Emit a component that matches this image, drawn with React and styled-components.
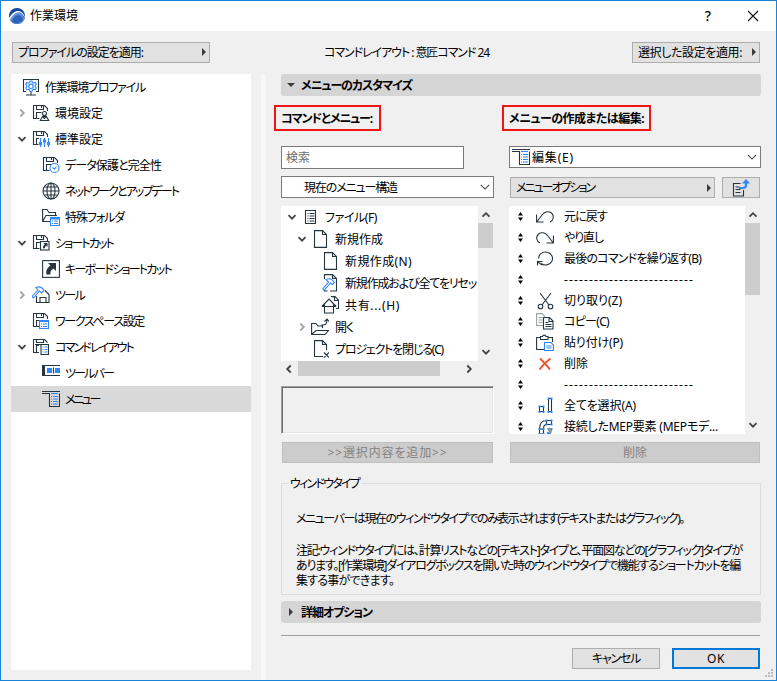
import React, { useLayoutEffect, useRef, useState } from "react";
import styled, { createGlobalStyle, css } from "styled-components";

const INK = "#263640";
const BLUE = "#2f86ff";

// spreads the letters of one line so that it takes exactly `w` pixels
const Label = ({ w, children, ...rest }) => {
  const ref = useRef(null);
  const [spacing, setSpacing] = useState(0);

  useLayoutEffect(() => {
    const natural = ref.current.getBoundingClientRect().width;
    setSpacing((w - natural) / children.length);
  }, []);

  return (
    <Text ref={ref} style={{ letterSpacing: `${spacing}px` }} {...rest}>
      {children}
    </Text>
  );
};

const Svg = ({ size = 18, children }) => (
  <svg width={size} height={size} viewBox={`0 0 ${size} ${size}`} fill="none" stroke={INK} strokeWidth="1.1">
    {children}
  </svg>
);

const Disk = () => (
  <>
    <path d="M7.5 14.5H1.5V1.5H12.5L15.5 4.5V7" />
    <path d="M4.5 1.5V5.5H11.5V1.5M9.5 2V4M4.5 14V8.5H9.5" />
  </>
);

const Lines = ({ x, y, w, n, gap = 2.5 }) =>
  Array.from({ length: n }, (_, i) => (
    <path key={i} stroke={BLUE} d={`M${x} ${y + i * gap}h1M${x + 2} ${y + i * gap}h${w}`} />
  ));

const icons = {
  profile: (
    <Svg>
      <path d="M4 13.5H1.5V1.5H16.5V13.5H14M9 14V16.5M4 17h10" />
      <path stroke={BLUE} d="M8 3h2l.4 1.6 1.2.6 1.6-.7 1.1 1.7-1.2 1.2v1.4l1.2 1.1-1 1.8-1.7-.5-1.2.8L10 13.5H8l-.4-1.5-1.2-.8-1.7.5-1-1.8 1.2-1.1V7.4L3.7 6.2l1.1-1.7 1.6.7 1.2-.6z" />
      <circle cx="9" cy="8.3" r="2.2" stroke={BLUE} />
    </Svg>
  ),
  user: (
    <Svg>
      <Disk />
      <circle cx="12.5" cy="9.5" r="2" fill="#fff" />
      <path fill="#fff" d="M10.5 12.5h4l2.2 4H8.3zM11 13l1.5 1.5L14 13" />
    </Svg>
  ),
  sliders: (
    <Svg>
      <path d="M6.5 14.5H1.5V1.5H12.5L15.5 4.5V7M4.5 1.5V5.5H11.5V1.5M9.5 2V4M4.5 14V8.5H7" />
      <path stroke={BLUE} strokeWidth="1.2" d="M8.5 8v9M12.5 8v9M16.5 8v9" />
      <path stroke={BLUE} strokeWidth="3" d="M7 13.5h3M11 11h3M15 13.5h3" />
    </Svg>
  ),
  clock: (
    <Svg>
      <Disk />
      <circle cx="12.5" cy="12" r="4.5" fill="#fff" stroke={BLUE} />
      <path stroke={BLUE} d="M10.5 11.5l2 1.5 2-2.5" />
    </Svg>
  ),
  globe: (
    <Svg>
      <circle cx="9" cy="9" r="8" />
      <ellipse cx="9" cy="9" rx="4" ry="8" />
      <path d="M9 1v16M1 9h16M2.5 5h13M2.5 13h13" />
    </Svg>
  ),
  folder: (
    <Svg>
      <path d="M8 13.5H.6V1.5H5L7 4.5H13.5V7.5M.6 13.5L4 7.5H15" />
      <rect x="8.5" y="9.5" width="9" height="8" fill="#fff" stroke={BLUE} />
      <path stroke={BLUE} strokeWidth="2" d="M8 10.5h10" />
      <Lines x={10} y={13} w={4} n={2} />
    </Svg>
  ),
  diskLink: (
    <Svg>
      <Disk />
      <rect x="8.5" y="7.5" width="8.5" height="8.5" fill="#fff" />
      <path fill={INK} stroke="none" d="M11.5 9h4v4l-1.3-1.3q-1.4.8-1.2 2.6h-2q-.5-2.6 1.8-4z" />
    </Svg>
  ),
  link: (
    <Svg>
      <rect x=".6" y=".6" width="16.8" height="16.8" />
      <path fill={INK} stroke="none" d="M6 3h8v8l-2.5-2.5C9 10 8 11.5 8.5 14.5H4.5C3.5 10.5 5.5 7.5 8.5 5.5z" />
    </Svg>
  ),
  hammer: (
    <Svg>
      <path d="M13 4.5l4 4V16.5H4.5V10M8 16V11.5h6V16" />
      <path stroke={BLUE} fill="#fff" d="M4 1.5C7 .2 10 1 12 4.5L9.5 7 7.5 5 1.5 12 0 10.5 6 4z" />
    </Svg>
  ),
  workspace: (
    <Svg>
      <Disk />
      <rect x="7.5" y="8.5" width="9" height="8" fill="#fff" stroke={BLUE} />
      <path stroke={BLUE} strokeWidth="2" d="M7 9h10" />
      <Lines x={9} y={12} w={4} n={2} />
    </Svg>
  ),
  diskMenu: (
    <Svg>
      <path d="M7 14.5H1.5V1.5H12.5L15.5 4.5M4.5 1.5V4.5H11.5V1.5M4.5 14V7.5H7M3 6.5h13.5V16.5H9V7" />
      <Lines x={10.5} y={9} w={3} n={3} />
    </Svg>
  ),
  toolbar: (
    <Svg>
      <path d="M0 1.5h18M0 11.5h18" />
      <path strokeWidth="3" d="M1.5 1v11" />
      <path stroke={BLUE} strokeWidth="5" d="M5 6.5h5M13 6.5h5" />
      <path d="M11.5 3.5v6" />
    </Svg>
  ),
  menu: (
    <Svg>
      <path d="M0 1.5h18M0 3.5h7.5V16.5H17.5V3.5" />
      <path stroke={BLUE} d="M9 3.5h7" />
      <Lines x={9} y={6.5} w={5} n={4} />
    </Svg>
  ),
  list: (
    <Svg>
      <path d="M4.5 2.5h10v13h-10zM6.5 5.5h1M8.5 5.5h5M6.5 8h1M8.5 8h5M6.5 10.5h1M8.5 10.5h5M6.5 13h1M8.5 13h5" />
    </Svg>
  ),
  page: (
    <Svg>
      <path d="M3.5 .6H11.5L15.5 4.5V17.4H3.5zM11.5 1V4.5H15" />
    </Svg>
  ),
  pageHammer: (
    <Svg>
      <path d="M3.5 5V.6H11.5L15.5 4.5V17H9M11.5 1V4.5H15M3.5 15v2h3" />
      <path stroke={BLUE} fill="#fff" d="M5 5.5C8 4 11 5 13.5 8.5L11.5 10.5 9.5 9 3 16.5 1.8 15 7.5 8z" />
    </Svg>
  ),
  share: (
    <Svg>
      <path d="M10 .6H14L17.5 4V12.5H15M13.5 1V4.5H17M.8 10.5L8 3l7.2 7.5M3.5 8.5V17H12.5V8.5M1 10.5h14" />
    </Svg>
  ),
  open: (
    <Svg>
      <path d="M.6 16.5V5.5H5L7 8H11.5V10M.6 16.5L5 12.5H17.5L14 16.5zM10.5 7C15 7.5 16 5.5 16 1.5M13.5 3.5L16 1l2 2.5" />
    </Svg>
  ),
  pageClose: (
    <Svg>
      <path d="M12 16.5H3.5V.6H11.5L15.5 4.5V10M11.5 1V4.5H15M13 12.5l5 5M18 12.5l-5 5" />
    </Svg>
  ),
  undo: (
    <Svg>
      <path d="M.6 6.5V14H7.5M.8 14L6 7C9 3.200 13 3 15.500 5C18.500 7.800 17.500 12.500 14 14" />
    </Svg>
  ),
  redo: (
    <Svg>
      <path d="M17.4 6.5V14H10.5M17.2 14L12 7C9 3.200 5 3 2.500 5C-.5 7.800.5 12.500 4 14" />
    </Svg>
  ),
  repeat: (
    <Svg>
      <path d="M2.5 8.5A7 6.5 0 1 1 5 13.5M1.5 15.5V11.5H6.5M2 12l4 3" />
    </Svg>
  ),
  cut: (
    <Svg>
      <path d="M4 1L13 13M15 1L6 13" />
      <circle cx="4.5" cy="14.5" r="2.3" />
      <circle cx="14.5" cy="14.5" r="2.3" />
    </Svg>
  ),
  copy: (
    <Svg>
      <path stroke="#9aa1a5" d="M7 12.5H.6V.6H6L9 3.5M2.5 4.5h4M2.5 7h4M2.5 9.5h4" />
      <path fill="#fff" d="M7.5 4.5H13.5L17 8V16H7.5zM13 5V8.5H17M9.5 9.5h3M9.5 11.5h6M9.5 13.5h6" />
    </Svg>
  ),
  paste: (
    <Svg>
      <path d="M8 15.5H.6V3.5H4.5M12 3.5h4.5V8M4.5 5.5V2.5H6.5C7 .6 9.5 .6 10 2.5H12V5.5z" />
      <path stroke={BLUE} fill="#fff" d="M8.5 8.5H15L17.4 11V16.5H8.5zM10.5 12h5M10.5 14h5" />
    </Svg>
  ),
  remove: (
    <Svg>
      <path stroke="#f4512c" strokeWidth="2" d="M4 3.5Q9 8 14 14.5M14.5 3.5Q8 8 3.5 14.5" />
    </Svg>
  ),
  selectAll: (
    <Svg>
      <path d="M3.5 9.5h4v5h-4zM12.5 1.5h3v13h-3z" />
      <path stroke={BLUE} strokeWidth="2" d="M2.5 9.5h2M6.5 9.5h2M2.5 15h2M6.5 15h2M11.5 1.5h2M14.5 1.5h2M11.5 15h2M14.5 15h2" />
    </Svg>
  ),
  mep: (
    <Svg>
      <path d="M3.5 11C3.5 5.5 6 2.5 10.5 2.5V6.5C8.5 6.5 7.5 8 7.5 11zM3.5 11h4v5h-4zM10.5 2.5h5v4h-5z" />
      <path stroke={BLUE} strokeWidth="2" d="M2.5 11h2M6.5 11h2M2.5 16h2M6.5 16h2M9.5 2.5h2M14.5 2.5h2M9.5 6.5h2M14.5 6.5h2" />
      <path stroke="#909699" strokeWidth="3" d="M11.5 11.5q3-1 3 1t-2 3.5" />
      <path stroke={BLUE} strokeWidth="2" d="M11 14.5l3 2M15 10.5l1.5 1" />
    </Svg>
  ),
  exportList: (
    <Svg>
      <path d="M8.5 4.5H1.5V17H11.5V11M3.5 8h4M3.5 10.5h5M3.5 13.5h5" />
      <path stroke={BLUE} strokeWidth="2.2" d="M7 9h4q3 0 3-3V2" />
      <path stroke="none" fill={BLUE} d="M10 4.5L14 0l4 4.5z" />
    </Svg>
  ),
};

const Chevron = ({ dir = "down", color = "#444", width = 1.8, size = 10 }) => {
  const d = {
    down: "M1.5 3.2L5 6.7 8.5 3.2",
    up: "M1.5 6.7L5 3.2 8.5 6.7",
    left: "M6.7 1.5L3.2 5 6.7 8.5",
    right: "M3.3 1.5L6.8 5 3.3 8.5",
  }[dir];
  return (
    <svg width={size} height={size} viewBox="0 0 10 10" fill="none" stroke={color} strokeWidth={width}>
      <path d={d} />
    </svg>
  );
};

const Triangle = ({ down }) => (
  <svg width="8" height="8" viewBox="0 0 8 8" fill="#3c3c3c">
    <path d={down ? "M0 2H8L4 6z" : "M2 0V8L6 4z"} />
  </svg>
);

const sideTree = [
  ["profile", "作業環境プロファイル", 100, 0, null],
  ["user", "環境設定", 48, 1, "right"],
  ["sliders", "標準設定", 48, 1, "down"],
  ["clock", "データ保護と完全性", 96, 2, null],
  ["globe", "ネットワークとアップデート", 113, 2, null],
  ["folder", "特殊フォルダ", 59, 2, null],
  ["diskLink", "ショートカット", 58, 1, "down"],
  ["link", "キーボードショートカット", 106, 2, null],
  ["hammer", "ツール", 29, 1, "right"],
  ["workspace", "ワークスペース設定", 89, 1, null],
  ["diskMenu", "コマンドレイアウト", 78, 1, "down"],
  ["toolbar", "ツールバー", 48, 2, null],
  ["menu", "メニュー", 34, 2, null],
];

const commandTree = [
  ["list", "ファイル(F)", 52, 0, "down"],
  ["page", "新規作成", 48, 1, "down"],
  ["page", "新規作成(N)", 67, 2, null],
  ["pageHammer", "新規作成および全てをリセッ", 131, 2, null],
  ["share", "共有...(H)", 55, 2, null],
  ["open", "開く", 18, 1, "right"],
  ["pageClose", "プロジェクトを閉じる(C)", 108, 1, null],
];

const menuItems = [
  ["undo", "元に戻す", 43],
  ["redo", "やり直し", 39],
  ["repeat", "最後のコマンドを繰り返す(B)", 137],
  [null, "--------------------------", 130],
  ["cut", "切り取り(Z)", 58],
  ["copy", "コピー(C)", 45],
  ["paste", "貼り付け(P)", 59],
  ["remove", "削除", 24],
  [null, "--------------------------", 130],
  ["selectAll", "全てを選択(A)", 72],
  ["mep", "接続したMEP要素 (MEPモデ...", 154],
];

const App = () => (
  <>
    <GlobalStyle />
    <Window>
      <TitleBar>
        <svg width="16" height="16" viewBox="0 0 16 16">
          <circle cx="8" cy="8" r="8" fill="#16469a" />
          <path fill="#5d8fda" d="M.6 11.5C3 7 6 4 9.5 4c3 0 5 4 6 7a8 8 0 0 1-7.5 5c-2 0-5-1-7.4-4.5z" />
          <path fill="#fff" d="M0 10.5C2.5 5.5 5.5 3 9.5 3c3 0 5 2.5 6.3 5.5v1C13.5 6 12 4.2 9.5 4.2 6 4.2 3 8 .8 12z" />
          <path fill="#2e62b8" d="M3 14C4 10 6.5 7 9.5 7c2 0 4 2 4.5 5a8 8 0 0 1-11 2z" />
        </svg>
        <Title>
          <Label w={48}>作業環境</Label>
        </Title>
        <Help>?</Help>
        <svg width="12" height="12" viewBox="0 0 12 12" stroke="#111" strokeWidth="1.1">
          <path d="M1 1l10 10M11 1L1 11" />
        </svg>
      </TitleBar>

      <TopRow>
        <PopButton $w={198}>
          <Label w={125}>プロファイルの設定を適用:</Label>
          <Triangle />
        </PopButton>
        <Heading>
          <Label w={165}>コマンドレイアウト : 意匠コマンド 24</Label>
        </Heading>
        <PopButton $w={128}>
          <Label w={104}>選択した設定を適用:</Label>
          <Triangle />
        </PopButton>
      </TopRow>

      <Body>
        <Sidebar>
          {sideTree.map(([icon, text, w, level, arrow]) => (
            <SideRow key={text} $level={level} $active={icon === "menu"}>
              <Arrow>{arrow && <Chevron dir={arrow} color={arrow === "right" ? "#a3a3a3" : "#444"} />}</Arrow>
              <Icon>{icons[icon]}</Icon>
              <Label w={w}>{text}</Label>
            </SideRow>
          ))}
        </Sidebar>
        <Splitter />

        <Main>
          <SectionBar>
            <Triangle down />
            <Label w={111}>メニューのカスタマイズ</Label>
          </SectionBar>

          <Columns>
            <LeftColumn>
              <RedBox $w={107}>
                <Label w={91}>コマンドとメニュー:</Label>
              </RedBox>
              <Search>
                <Label w={24}>検索</Label>
              </Search>
              <Select $top={7} $pad={22}>
                <Label w={93}>現在のメニュー構造</Label>
                <Chevron width={0.9} size={12} />
              </Select>
              <ListArea $top={8} $h={155}>
                <List>
                  {commandTree.map(([icon, text, w, level, arrow]) => (
                    <CommandRow key={text} $level={level}>
                      <Arrow>{arrow && <Chevron dir={arrow} color={arrow === "right" ? "#a3a3a3" : "#444"} />}</Arrow>
                      <Icon>{icons[icon]}</Icon>
                      <Label w={w}>{text}</Label>
                    </CommandRow>
                  ))}
                </List>
                <VScroll $thumb={25}>
                  <Chevron dir="up" />
                  <i />
                  <Chevron />
                </VScroll>
              </ListArea>
              <HScroll>
                <Chevron dir="left" />
                <i />
                <Chevron dir="right" />
              </HScroll>
              <Preview />
              <DisabledButton>
                <Label w={120}>{">>選択内容を追加>>"}</Label>
              </DisabledButton>
            </LeftColumn>

            <RightColumn>
              <RedBox $w={149}>
                <Label w={135}>メニューの作成または編集:</Label>
              </RedBox>
              <Select $top={15} $pad={2}>
                {icons.menu}
                <Label w={42}>編集(E)</Label>
                <Chevron width={0.9} size={12} />
              </Select>
              <OptionRow>
                <PopButton $w={205}>
                  <Label w={78}>メニューオプション</Label>
                  <Triangle />
                </PopButton>
                <IconButton>{icons.exportList}</IconButton>
              </OptionRow>
              <ListArea $top={8} $h={228}>
                <List>
                  {menuItems.map(([icon, text, w], i) => (
                    <ItemRow key={i}>
                      <svg width="5" height="9" viewBox="0 0 5 9">
                        <path d="M0 3.5L2.5 0 5 3.5zM0 5.5L2.5 9 5 5.5z" />
                      </svg>
                      <Icon>{icon && icons[icon]}</Icon>
                      <Label w={w}>{text}</Label>
                    </ItemRow>
                  ))}
                </List>
                <VScroll $thumb={72}>
                  <Chevron dir="up" />
                  <i />
                  <Chevron />
                </VScroll>
              </ListArea>
              <DisabledButton>
                <Label w={24}>削除</Label>
              </DisabledButton>
            </RightColumn>
          </Columns>

          <Group>
            <legend>
              <Label w={69}>ウィンドウタイプ</Label>
            </legend>
            <Label w={388}>メニューバーは現在のウィンドウタイプでのみ表示されます(テキストまたはグラフィック)。</Label>
            <Note>
              <Label w={446}>注記:ウィンドウタイプには、計算リストなどの[テキスト]タイプと、平面図などの[グラフィック]タイプが</Label>
              <Label w={444}>あります。[作業環境]ダイアログボックスを開いた時のウィンドウタイプで機能するショートカットを編</Label>
              <Label w={98}>集する事ができます。</Label>
            </Note>
          </Group>

          <SectionBar>
            <Triangle />
            <Label w={71}>詳細オプション</Label>
          </SectionBar>
          <Rule />
          <Footer>
            <Button>
              <Label w={48}>キャンセル</Label>
            </Button>
            <Button $primary>
              <Label w={18}>OK</Label>
            </Button>
          </Footer>
        </Main>
      </Body>
      <Grip width="9" height="9" viewBox="0 0 9 9">
        <path fill="#bdbdbd" d="M6 0h2v2h-2zM3 3h2v2h-2zM6 3h2v2h-2zM0 6h2v2h-2zM3 6h2v2h-2zM6 6h2v2h-2z" />
      </Grip>
    </Window>
  </>
);

export default App;

const GlobalStyle = createGlobalStyle`
  * {
    box-sizing: border-box;
  }
  body {
    margin: 0;
    overflow: hidden;
    color: #000;
    font: 12px/15px "Noto Sans", "Noto Sans CJK JP", sans-serif;
    font-feature-settings: "palt";
  }
  svg {
    display: block;
    flex: none;
  }
`;

const Text = styled.span`
  display: inline-block;
  flex: none;
  line-height: 15px;
  white-space: pre;
`;

const Window = styled.div`
  position: relative;
  width: 777px;
  height: 681px;
  border: 1px solid #1883d7;
  background: #f0f0f0;
`;

const TitleBar = styled.header`
  display: flex;
  align-items: center;
  height: 30px;
  padding: 0 17px 1px 8px;
  background: #fff;
`;

const Title = styled.div`
  flex: 1;
  margin-left: 5px;
`;

const Help = styled.span`
  margin-right: 36px;
  font-size: 14px;
  font-weight: 500;
`;

const TopRow = styled.div`
  display: flex;
  align-items: center;
  justify-content: space-between;
  height: 43px;
  padding: 0 16px 1px 11px;
`;

const Heading = styled.div`
  margin-left: 34px;
  margin-right: 63px;
`;

const buttonFace = css`
  display: flex;
  align-items: center;
  height: 21px;
  border: 1px solid #adadad;
  background: #e1e1e1;
`;

const PopButton = styled.div`
  ${buttonFace}
  justify-content: space-between;
  width: ${(p) => p.$w}px;
  padding: 0 1px 0 5px;
`;

const IconButton = styled.div`
  ${buttonFace}
  justify-content: center;
  width: 38px;
`;

const Body = styled.div`
  display: flex;
  height: 606px;
  padding-left: 10px;
`;

const Sidebar = styled.nav`
  width: 240px;
  height: 596px;
  background: #fff;
`;

const Arrow = styled.span`
  flex: none;
  width: 10px;
`;

const Icon = styled.span`
  flex: none;
  width: 18px;
  height: 18px;
`;

const SideRow = styled.div`
  display: flex;
  align-items: center;
  height: 26px;
  padding-left: ${(p) => [1, 6, 15][p.$level]}px;
  background: ${(p) => (p.$active ? "#d9d9d9" : "transparent")};
  ${Icon} {
    margin: 0 ${(p) => [5, 5, 5][p.$level]}px 0 ${(p) => [0, 5, 6][p.$level]}px;
  }
`;

const Splitter = styled.div`
  width: 5px;
  margin: 0 15px 0 10px;
  background: #f7f7f7;
`;

const Main = styled.main`
  width: 480px;
`;

const SectionBar = styled.div`
  display: flex;
  align-items: center;
  gap: 6px;
  height: 22px;
  padding: 0 6px;
  border-radius: 3px;
  background: #d5d5d5;
  font-weight: 700;
`;

const Columns = styled.div`
  display: flex;
  gap: 15px;
  padding-top: 9px;
`;

const LeftColumn = styled.section`
  width: 213px;
`;

const RightColumn = styled.section`
  width: 252px;
`;

const RedBox = styled.div`
  width: ${(p) => p.$w}px;
  height: 26px;
  margin-left: -7px;
  padding: 4px 0 0 5px;
  border: 2px solid #f01414;
  font-weight: 700;
`;

const Search = styled.div`
  width: 183px;
  height: 23px;
  margin-top: 15px;
  padding: 3px 4px;
  border: 1px solid #7a7a7a;
  background: #fff;
  color: #6d6d6d;
`;

const Select = styled.div`
  display: flex;
  align-items: center;
  height: 22px;
  margin-top: ${(p) => p.$top}px;
  padding: 0 2px 0 ${(p) => p.$pad}px;
  border: 1px solid #7a7a7a;
  background: #fff;
  > svg:last-child {
    margin-left: auto;
  }
  > svg:first-child {
    margin-right: 2px;
  }
`;

const OptionRow = styled.div`
  display: flex;
  gap: 7px;
  margin: 9px 0 0 1px;
`;

const ListArea = styled.div`
  display: flex;
  height: ${(p) => p.$h}px;
  margin-top: ${(p) => p.$top}px;
`;

const List = styled.div`
  flex: 1;
  overflow: hidden;
  background: #fff;
`;

const CommandRow = styled.div`
  display: flex;
  align-items: center;
  height: 22px;
  padding-left: ${(p) => 6 + p.$level * 10}px;
  ${Icon} {
    margin: 0 6px 0 4px;
  }
`;

const ItemRow = styled.div`
  display: flex;
  align-items: center;
  height: 21px;
  padding-left: 9px;
  ${Icon} {
    margin: 0 10px 0 13px;
  }
`;

const VScroll = styled.div`
  display: flex;
  flex-direction: column;
  align-items: center;
  width: 15px;
  margin-right: 1px;
  padding: 4px 0;
  i {
    width: 15px;
    height: ${(p) => p.$thumb}px;
    margin: 3px 0 auto;
    background: #cdcdcd;
  }
`;

const HScroll = styled.div`
  display: flex;
  align-items: center;
  width: 197px;
  height: 15px;
  padding: 0 4px 0 3px;
  i {
    width: 142px;
    height: 15px;
    margin: 0 auto 0 4px;
    background: #cdcdcd;
  }
`;

const Preview = styled.div`
  height: 48px;
  margin-top: 10px;
  border: 1px solid;
  border-color: #a0a0a0 #fff #fff #a0a0a0;
  box-shadow: inset 1px 1px #696969, inset -1px -1px #e3e3e3;
`;

const DisabledButton = styled.div`
  display: flex;
  align-items: center;
  justify-content: center;
  height: 21px;
  margin: 8px 1px 0;
  border: 1px solid #bfbfbf;
  background: #ccc;
  color: #838383;
`;

const Group = styled.fieldset`
  height: 119px;
  margin: 13px 0 6px;
  padding: 20px 14px 0;
  border: 1px solid #dcdcdc;
  legend {
    height: 15px;
    margin-left: -8px;
    padding: 0 2px;
  }
`;

const Note = styled.div`
  display: flex;
  flex-direction: column;
  align-items: flex-start;
  margin-top: 17px;
`;

const Rule = styled.div`
  width: 479px;
  height: 1px;
  margin-top: 12px;
  background: #a0a0a0;
`;

const Footer = styled.div`
  display: flex;
  justify-content: flex-end;
  gap: 12px;
  padding: 12px 1px 0 0;
`;

const Button = styled.div`
  ${buttonFace}
  justify-content: center;
  width: 88px;
  ${(p) => p.$primary && "border: 2px solid #0078d7;"}
`;

const Grip = styled.svg`
  position: absolute;
  right: 2px;
  bottom: 2px;
`;
